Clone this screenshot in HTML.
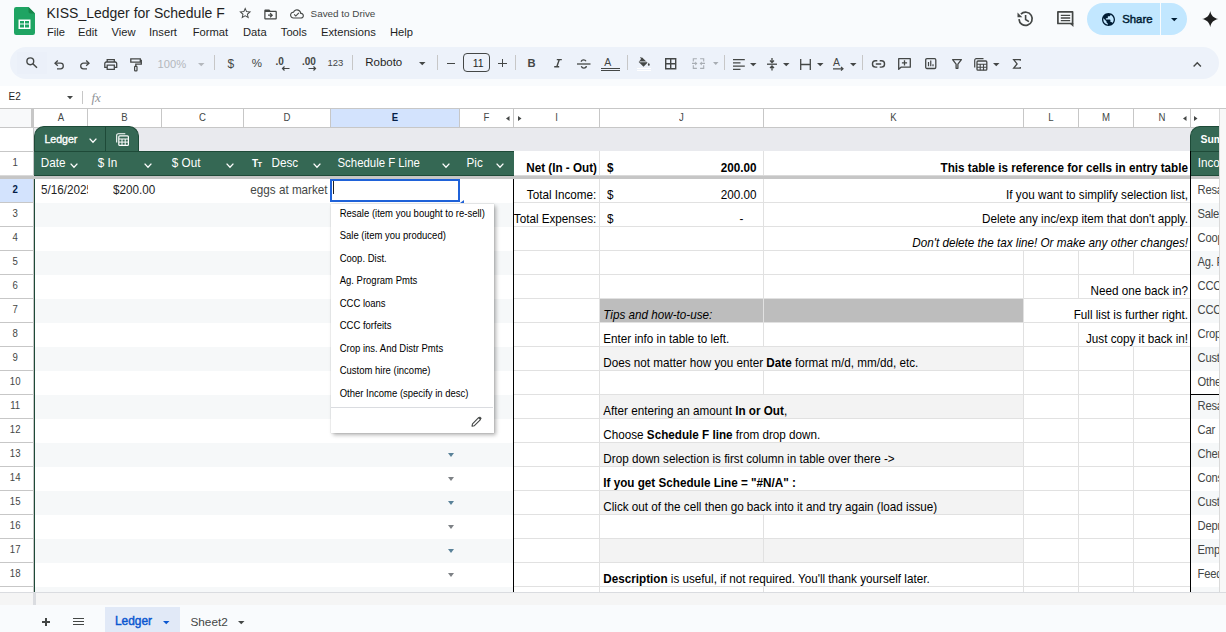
<!DOCTYPE html>
<html><head><meta charset="utf-8">
<style>
*{margin:0;padding:0;box-sizing:border-box}
html,body{width:1226px;height:632px;overflow:hidden;background:#f9fbfd;font-family:"Liberation Sans",sans-serif;color:#1f1f1f;position:relative}
.a{position:absolute}
.t{position:absolute;white-space:nowrap;line-height:1}
svg{position:absolute;overflow:visible}
</style></head><body>

<svg style="left:14px;top:7px" width="21" height="28" viewBox="0 0 21 28"><path d="M2.2 0H14.5L21 6.5V25.8a2.2 2.2 0 0 1-2.2 2.2H2.2A2.2 2.2 0 0 1 0 25.8V2.2A2.2 2.2 0 0 1 2.2 0z" fill="#1fa463"/>
<path d="M14.5 0L21 6.5H16.3a1.8 1.8 0 0 1-1.8-1.8z" fill="#16864a"/>
<path d="M4.5 12.5h12v9.5h-12z" fill="#fff"/>
<path d="M6 14h4v2.5H6zM11 14h4v2.5h-4zM6 17.5h4V20.5H6zM11 17.5h4V20.5h-4z" fill="#1fa463"/></svg>
<div class="t" style="left:46.50px;top:6.15px;font-size:14px;color:#1f1f1f;font-weight:normal;font-style:normal;">KISS_Ledger for Schedule F</div>
<svg style="left:238.3px;top:6.4px" width="14.4" height="14.4" viewBox="0 0 24 24"><path d="M22 9.24l-7.19-.62L12 2 9.19 8.63 2 9.24l5.46 4.73L5.82 21 12 17.27 18.18 21l-1.63-7.03L22 9.24zM12 15.4l-3.76 2.27 1-4.28-3.32-2.88 4.38-.38L12 6.1l1.71 4.04 4.38.38-3.32 2.88 1 4.28L12 15.4z" fill="#444746"/></svg>
<svg style="left:263.3px;top:6.9px" width="15.1" height="15.1" viewBox="0 0 24 24"><path d="M20 6h-8l-2-2H4c-1.1 0-1.99.9-1.99 2L2 18c0 1.1.9 2 2 2h16c1.1 0 2-.9 2-2V8c0-1.1-.9-2-2-2zm0 12H4V8h16v10zM12.16 12H8v2h4.16l-1.59 1.59L11.98 17 16 13l-4.02-4-1.41 1.41z" fill="#444746"/></svg>
<svg style="left:290px;top:6.6px" width="13.9" height="13.9" viewBox="0 0 24 24"><path d="M19.35 10.04C18.67 6.59 15.64 4 12 4 9.11 4 6.6 5.64 5.35 8.04 2.34 8.36 0 10.91 0 14c0 3.31 2.69 6 6 6h13c2.76 0 5-2.24 5-5 0-2.64-2.05-4.78-4.65-4.96zM19 18H6c-2.21 0-4-1.79-4-4 0-2.05 1.53-3.76 3.56-3.97l1.07-.11.5-.95C8.08 7.14 9.94 6 12 6c2.62 0 4.88 1.86 5.39 4.43l.3 1.5 1.53.11c1.56.1 2.78 1.41 2.78 2.96 0 1.65-1.35 3-3 3zm-9-3.82l-2.09-2.09L6.5 13.5 10 17l6.01-6.01-1.41-1.41z" fill="#444746"/></svg>
<div class="t" style="left:310.60px;top:8.82px;font-size:9.9px;color:#444746;font-weight:normal;font-style:normal;">Saved to Drive</div>
<div class="t" style="left:47.00px;top:27.12px;font-size:11.2px;color:#1f1f1f;font-weight:normal;font-style:normal;">File</div>
<div class="t" style="left:78.00px;top:27.12px;font-size:11.2px;color:#1f1f1f;font-weight:normal;font-style:normal;">Edit</div>
<div class="t" style="left:111.60px;top:27.12px;font-size:11.2px;color:#1f1f1f;font-weight:normal;font-style:normal;">View</div>
<div class="t" style="left:149.00px;top:27.12px;font-size:11.2px;color:#1f1f1f;font-weight:normal;font-style:normal;">Insert</div>
<div class="t" style="left:192.70px;top:27.12px;font-size:11.2px;color:#1f1f1f;font-weight:normal;font-style:normal;">Format</div>
<div class="t" style="left:243.00px;top:27.12px;font-size:11.2px;color:#1f1f1f;font-weight:normal;font-style:normal;">Data</div>
<div class="t" style="left:280.80px;top:27.12px;font-size:11.2px;color:#1f1f1f;font-weight:normal;font-style:normal;">Tools</div>
<div class="t" style="left:321.00px;top:27.12px;font-size:11.2px;color:#1f1f1f;font-weight:normal;font-style:normal;">Extensions</div>
<div class="t" style="left:390.00px;top:27.12px;font-size:11.2px;color:#1f1f1f;font-weight:normal;font-style:normal;">Help</div>
<svg style="left:1016.5px;top:10.5px" width="17" height="16" viewBox="0 0 17 16"><path d="M2 8.1A6.6 6.6 0 1 0 3.93 3.13" fill="none" stroke="#444746" stroke-width="1.7"/><path d="M0.5 1.5V6.3H5.3z" fill="#444746"/><path d="M8.6 3.9V8.5L11.9 10.6" fill="none" stroke="#444746" stroke-width="1.6"/></svg>
<svg style="left:1056.5px;top:11px" width="17" height="16" viewBox="0 0 17 16"><path d="M0.9 0.9H15.6V12.5H0.9z" fill="none" stroke="#444746" stroke-width="1.7" stroke-linejoin="round"/><path d="M12.4 12.3L16.45 16V12.3z" fill="#444746"/><path d="M3.8 4.4H13.2M3.8 7H13.2M3.8 9.6H13.2" stroke="#444746" stroke-width="1.3"/></svg>
<div class="a" style="left:1087px;top:3px;width:100px;height:32px;background:#c2e7ff;border-radius:16px"></div>
<div class="a" style="left:1160px;top:3px;width:1px;height:32px;background:#f9fbfd;"></div>
<svg style="left:1102px;top:12.8px" width="13" height="13" viewBox="2 2 20 20"><path d="M12 2C6.48 2 2 6.48 2 12s4.48 10 10 10 10-4.48 10-10S17.52 2 12 2zm-1 17.93c-3.95-.49-7-3.85-7-7.93 0-.62.08-1.21.21-1.79L9 15v1c0 1.1.9 2 2 2v1.93zm6.9-2.54c-.26-.81-1-1.39-1.9-1.39h-1v-3c0-.55-.45-1-1-1H8v-2h2c.55 0 1-.45 1-1V7h2c1.1 0 2-.9 2-2v-.41c2.93 1.19 5 4.06 5 7.41 0 2.08-.8 3.97-2.1 5.39z" fill="#001d35"/></svg>
<div class="t" style="left:1122.20px;top:13.75px;font-size:11.4px;color:#001d35;font-weight:normal;font-style:normal;-webkit-text-stroke:0.45px #001d35">Share</div>
<svg style="left:1170.5px;top:18px" width="7" height="4" viewBox="0 0 7 4"><path d="M0 0h6.5L3.25 3.2z" fill="#001d35"/></svg>
<svg style="left:1201.5px;top:10.8px" width="16.5" height="16" viewBox="0 0 16.5 16"><path d="M8.25 0C8.9 4.3 12 7.4 16.5 8 12 8.6 8.9 11.7 8.25 16 7.6 11.7 4.5 8.6 0 8 4.5 7.4 7.6 4.3 8.25 0z" fill="#1f1f1f"/></svg>
<div class="a" style="left:10px;top:47px;width:1209px;height:32px;background:#edf2fa;border-radius:16px"></div>
<div class="a" style="left:17px;top:52px;width:30px;height:22px;background:#ebf0f9;"></div>
<svg style="left:26px;top:57.2px" width="12" height="11" viewBox="0 0 12 11"><circle cx="4.3" cy="4.3" r="3.4" fill="none" stroke="#444746" stroke-width="1.4"/><path d="M6.8 6.8l4.2 4" stroke="#444746" stroke-width="1.5"/></svg>
<svg style="left:54px;top:60px" width="10" height="9" viewBox="0 0 10 9"><path d="M1.5 3.2h5a2.8 2.8 0 0 1 0 5.6H3" fill="none" stroke="#444746" stroke-width="1.3"/><path d="M3.8 0.6L1 3.2l2.8 2.6" fill="none" stroke="#444746" stroke-width="1.3"/></svg>
<svg style="left:79.5px;top:60px" width="10" height="9" viewBox="0 0 10 9"><path d="M8.5 3.2h-5a2.8 2.8 0 0 0 0 5.6H7" fill="none" stroke="#444746" stroke-width="1.3"/><path d="M6.2 0.6L9 3.2 6.2 5.8" fill="none" stroke="#444746" stroke-width="1.3"/></svg>
<svg style="left:104px;top:58.5px" width="13.5" height="11" viewBox="0 0 13.5 11"><path d="M3.2 3V0.7h7.1V3" fill="none" stroke="#444746" stroke-width="1.3"/><path d="M3 8.3H0.8V4.5a1.5 1.5 0 0 1 1.5-1.5h8.9a1.5 1.5 0 0 1 1.5 1.5v3.8H10.5" fill="none" stroke="#444746" stroke-width="1.3"/><path d="M3.2 6.2h7.1v4.2H3.2z" fill="none" stroke="#444746" stroke-width="1.3"/></svg>
<svg style="left:130px;top:57.5px" width="12" height="13.5" viewBox="0 0 12 13.5"><path d="M0.8 0.8h9.5v3.4H0.8z" fill="none" stroke="#444746" stroke-width="1.3"/><path d="M10.3 2.5h1v3.6H5.8v2.2" fill="none" stroke="#444746" stroke-width="1.3"/><rect x="4.6" y="8.3" width="2.4" height="4.6" rx="0.6" fill="none" stroke="#444746" stroke-width="1.2"/></svg>
<div class="t" style="left:157.50px;top:58.82px;font-size:11.2px;color:#b4b8bd;font-weight:normal;font-style:normal;">100%</div>
<svg style="left:197.5px;top:62.5px" width="7" height="3.5" viewBox="0 0 7 3.5"><path d="M0 0h6.5L3.25 3.2z" fill="#b4b8bd"/></svg>
<div class="a" style="left:214px;top:55px;width:1px;height:15px;background:#c7c7c7;"></div>
<div class="t" style="left:227.60px;top:57.64px;font-size:12px;color:#444746;font-weight:normal;font-style:normal;">$</div>
<div class="t" style="left:251.80px;top:58.07px;font-size:11.5px;color:#444746;font-weight:normal;font-style:normal;">%</div>
<div class="t" style="left:275.50px;top:56.53px;font-size:10px;color:#444746;font-weight:bold;font-style:normal;">.0</div>
<svg style="left:281px;top:65.5px" width="9" height="5" viewBox="0 0 9 5"><path d="M8.5 2.5H1.5M3.5 0.5l-2 2 2 2" fill="none" stroke="#444746" stroke-width="1.2"/></svg>
<div class="t" style="left:302.00px;top:56.53px;font-size:10px;color:#444746;font-weight:bold;font-style:normal;">.00</div>
<svg style="left:308px;top:65.5px" width="9" height="5" viewBox="0 0 9 5"><path d="M0.5 2.5h7M5.5 0.5l2 2-2 2" fill="none" stroke="#444746" stroke-width="1.2"/></svg>
<div class="t" style="left:327.50px;top:58.46px;font-size:9.5px;color:#444746;font-weight:normal;font-style:normal;">123</div>
<div class="a" style="left:352px;top:55px;width:1px;height:15px;background:#c7c7c7;"></div>
<div class="t" style="left:365.20px;top:57.27px;font-size:11.5px;color:#1f1f1f;font-weight:normal;font-style:normal;">Roboto</div>
<svg style="left:418.5px;top:62px" width="6.5" height="3.5" viewBox="0 0 6.5 3.5"><path d="M0 0h6.5L3.25 3.2z" fill="#444746"/></svg>
<div class="a" style="left:437px;top:55px;width:1px;height:15px;background:#c7c7c7;"></div>
<div class="a" style="left:446.6px;top:62.5px;width:8.5px;height:1.4px;background:#444746;"></div>
<div class="a" style="left:463.3px;top:53.2px;width:26.4px;height:19.2px;border:1.3px solid #444746;border-radius:4px"></div>
<div class="t" style="left:472.70px;top:58.11px;font-size:10.5px;color:#1f1f1f;font-weight:normal;font-style:normal;">11</div>
<div class="a" style="left:498px;top:62.5px;width:8.5px;height:1.4px;background:#444746;"></div>
<div class="a" style="left:501.55px;top:58.5px;width:1.4px;height:8.5px;background:#444746;"></div>
<div class="a" style="left:515px;top:55px;width:1px;height:15px;background:#c7c7c7;"></div>
<div class="t" style="left:527.60px;top:58.02px;font-size:11.2px;color:#444746;font-weight:bold;font-style:normal;">B</div>
<svg style="left:554px;top:59.3px" width="8" height="8.5" viewBox="0 0 8 8.5"><path d="M2.8 0.6h5M0.2 7.8h5M5.3 0.6l-2.5 7.2" fill="none" stroke="#444746" stroke-width="1.4"/></svg>
<svg style="left:576.8px;top:58.5px" width="13.5" height="10" viewBox="0 0 13.5 10"><path d="M0 5h13.5" stroke="#444746" stroke-width="1.3"/><path d="M9 2.2C8.5 1.2 7.6 0.8 6.7 0.8 5.3 0.8 4.3 1.5 4.3 2.8M4.3 7.2c.4 1.2 1.4 1.9 2.5 1.9 1.4 0 2.5-.7 2.5-2" fill="none" stroke="#444746" stroke-width="1.3"/></svg>
<div class="t" style="left:604.30px;top:56.71px;font-size:10.5px;color:#444746;font-weight:normal;font-style:normal;">A</div>
<div class="a" style="left:601px;top:68px;width:19px;height:1px;background:#444746;"></div>
<div class="a" style="left:601px;top:70px;width:19px;height:1px;background:#444746;"></div>
<div class="a" style="left:627px;top:55px;width:1px;height:15px;background:#c7c7c7;"></div>
<svg style="left:637.9px;top:57px" width="12" height="9.5" viewBox="0 0 12 9.5"><path d="M4.2 0.5l5.3 5.3-4 4-4.8-4.8z" fill="#444746"/><path d="M1.5 4.8h7.2" stroke="#edf2fa" stroke-width="0.8"/><path d="M10.8 5.8c.6.9 1 1.5 1 2a1 1 0 0 1-2 0c0-.5.4-1.1 1-2z" fill="#444746"/><path d="M2.5 0.3l2 2" stroke="#444746" stroke-width="1.2"/></svg>
<div class="a" style="left:636.5px;top:68px;width:14px;height:1px;background:#ffffff;"></div>
<div class="a" style="left:636.5px;top:70px;width:14px;height:1px;background:#ffffff;"></div>
<svg style="left:665px;top:58px" width="11.5" height="11.5" viewBox="0 0 11.5 11.5"><path d="M0.7 0.7h10v10h-10zM5.7 0.7v10M0.7 5.7h10" fill="none" stroke="#444746" stroke-width="1.4"/></svg>
<svg style="left:692px;top:58px" width="13" height="11" viewBox="0 0 13 11"><path d="M4.9 0.7H1.3V3.6M1.3 7.2V10.4H4.9M8.1 0.7h3.6V3.6M11.7 7.2V10.4H8.1M0 5.4h3.8M13 5.4H9.2" fill="none" stroke="#a8adb3" stroke-width="1.1"/><path d="M3.2 3.4L5.4 5.4 3.2 7.4zM9.8 3.4L7.6 5.4 9.8 7.4z" fill="#a8adb3"/></svg>
<svg style="left:712.5px;top:62px" width="5.5" height="3" viewBox="0 0 5.5 3"><path d="M0 0h5.5L2.75 3z" fill="#a8adb3"/></svg>
<div class="a" style="left:724px;top:55px;width:1px;height:15px;background:#c7c7c7;"></div>
<svg style="left:732.8px;top:58.5px" width="12" height="11" viewBox="0 0 12 11"><path d="M0 0.7h11.8M0 3.9h7.5M0 7.1h11.8M0 10.3h7.5" stroke="#444746" stroke-width="1.3"/></svg>
<svg style="left:749.8px;top:63px" width="6.5" height="3.5" viewBox="0 0 6.5 3.5"><path d="M0 0h6.5L3.25 3.2z" fill="#444746"/></svg>
<svg style="left:766.5px;top:57.5px" width="10" height="12.5" viewBox="0 0 10 12.5"><path d="M0 6.2h10" stroke="#444746" stroke-width="1.3"/><path d="M5 0v4.2M3 2.5L5 4.5 7 2.5M5 12.5V8.3M3 10l2-2 2 2" fill="none" stroke="#444746" stroke-width="1.3"/></svg>
<svg style="left:783px;top:63px" width="6.5" height="3.5" viewBox="0 0 6.5 3.5"><path d="M0 0h6.5L3.25 3.2z" fill="#444746"/></svg>
<svg style="left:800px;top:58.5px" width="11" height="11" viewBox="0 0 11 11"><path d="M0.7 0v11M10.3 0v11M0.7 5.5h9.6" fill="none" stroke="#444746" stroke-width="1.3"/></svg>
<svg style="left:817px;top:63px" width="6.5" height="3.5" viewBox="0 0 6.5 3.5"><path d="M0 0h6.5L3.25 3.2z" fill="#444746"/></svg>
<div class="t" style="left:833.00px;top:56.61px;font-size:10.5px;color:#444746;font-weight:normal;font-style:normal;">A</div>
<svg style="left:832.5px;top:66.5px" width="11" height="4.5" viewBox="0 0 11 4.5"><path d="M0 1.8h9.5M8 0l2 1.8-2 1.8" fill="none" stroke="#444746" stroke-width="1.2"/></svg>
<svg style="left:849.7px;top:63px" width="6.5" height="3.5" viewBox="0 0 6.5 3.5"><path d="M0 0h6.5L3.25 3.2z" fill="#444746"/></svg>
<div class="a" style="left:862px;top:55px;width:1px;height:15px;background:#c7c7c7;"></div>
<svg style="left:872px;top:59.5px" width="13" height="8" viewBox="0 0 13 8"><path d="M5.3 0.8H3.6a3.1 3.1 0 0 0 0 6.3h1.7M7.7 0.8h1.7a3.1 3.1 0 0 1 0 6.3H7.7M3.8 3.95h5.4" fill="none" stroke="#444746" stroke-width="1.4"/></svg>
<svg style="left:898.2px;top:57.7px" width="13" height="12" viewBox="0 0 13 12"><path d="M0.7 0.7h11.6v8.5H3L0.7 11.3z" fill="none" stroke="#444746" stroke-width="1.3" stroke-linejoin="round"/><path d="M6.5 2.3v5.2M3.9 4.9h5.2" stroke="#444746" stroke-width="1.3"/></svg>
<svg style="left:924.6px;top:58.3px" width="11.5" height="11.2" viewBox="0 0 11.5 11.2"><rect x="0.7" y="0.7" width="10.1" height="9.8" rx="1.2" fill="none" stroke="#444746" stroke-width="1.3"/><path d="M3.5 4v4.3M5.75 2.6v5.7M8 6.3v2" stroke="#444746" stroke-width="1.2"/></svg>
<svg style="left:951.6px;top:59.1px" width="10" height="9.5" viewBox="0 0 10 9.5"><path d="M0.6 0.7h8.8L5.9 5.2v4.1H4.1V5.2z" fill="none" stroke="#444746" stroke-width="1.3" stroke-linejoin="round"/></svg>
<svg style="left:974px;top:57.7px" width="13.5" height="12.8" viewBox="0 0 13.5 12.8"><path d="M0.7 9.5V2.3a1.6 1.6 0 0 1 1.6-1.6h7.2" fill="none" stroke="#444746" stroke-width="1.2"/><rect x="3" y="3" width="9.8" height="9.2" rx="1" fill="none" stroke="#444746" stroke-width="1.3"/><path d="M3 6.2h9.8M3 9.2h9.8M6.2 6.2v6M9.5 6.2v6" stroke="#444746" stroke-width="1.1"/></svg>
<svg style="left:993px;top:63px" width="6.5" height="3.5" viewBox="0 0 6.5 3.5"><path d="M0 0h6.5L3.25 3.2z" fill="#444746"/></svg>
<svg style="left:1012.7px;top:58.7px" width="7.5" height="9.8" viewBox="0 0 7.5 9.8"><path d="M7.3 1.8V0.7H0.7l3.4 4.2L0.7 9.1h6.6V8" fill="none" stroke="#444746" stroke-width="1.3"/></svg>
<svg style="left:1192.6px;top:61.8px" width="8.5" height="5" viewBox="0 0 8.5 5"><path d="M0.6 4.5l3.65-3.7 3.65 3.7" fill="none" stroke="#444746" stroke-width="1.4"/></svg>
<div class="a" style="left:0px;top:86px;width:1226px;height:22px;background:#ffffff;"></div>
<div class="t" style="left:8.50px;top:91.53px;font-size:10px;color:#1f1f1f;font-weight:normal;font-style:normal;">E2</div>
<svg style="left:66.6px;top:96px" width="6" height="3.2" viewBox="0 0 6 3.2"><path d="M0 0h6L3 3.2z" fill="#444746"/></svg>
<div class="a" style="left:82px;top:91px;width:1px;height:13px;background:#c7c7c7;"></div>
<div class="t" style="left:91.50px;top:90.50px;font-size:13px;color:#909398;font-weight:normal;font-style:italic;font-family:'Liberation Serif',serif;">fx</div>
<div class="a" style="left:0px;top:108px;width:1226px;height:497px;background:#ffffff;"></div>
<div class="a" style="left:0px;top:108px;width:1226px;height:1px;background:#c7c7c7;"></div>
<div class="a" style="left:0px;top:127px;width:1219px;height:1px;background:#c7c7c7;"></div>
<div class="a" style="left:0px;top:109px;width:31px;height:18px;background:#f8f9fa;"></div>
<div class="a" style="left:31px;top:109px;width:3px;height:18px;background:#c7c7c7;"></div>
<div class="a" style="left:331px;top:109px;width:128px;height:18px;background:#d3e3fd;"></div>
<div class="a" style="left:87px;top:109px;width:1px;height:18px;background:#c7c7c7;"></div>
<div class="t" style="left:-39.00px;width:200px;text-align:center;top:112.77px;font-size:9.6px;color:#444746;font-weight:normal;font-style:normal;transform-origin:0 8.13px;transform:scaleY(1.15);">A</div>
<div class="a" style="left:161px;top:109px;width:1px;height:18px;background:#c7c7c7;"></div>
<div class="t" style="left:24.50px;width:200px;text-align:center;top:112.77px;font-size:9.6px;color:#444746;font-weight:normal;font-style:normal;transform-origin:0 8.13px;transform:scaleY(1.15);">B</div>
<div class="a" style="left:243px;top:109px;width:1px;height:18px;background:#c7c7c7;"></div>
<div class="t" style="left:102.50px;width:200px;text-align:center;top:112.77px;font-size:9.6px;color:#444746;font-weight:normal;font-style:normal;transform-origin:0 8.13px;transform:scaleY(1.15);">C</div>
<div class="a" style="left:330px;top:109px;width:1px;height:18px;background:#c7c7c7;"></div>
<div class="t" style="left:187.00px;width:200px;text-align:center;top:112.77px;font-size:9.6px;color:#444746;font-weight:normal;font-style:normal;transform-origin:0 8.13px;transform:scaleY(1.15);">D</div>
<div class="a" style="left:459px;top:109px;width:1px;height:18px;background:#c7c7c7;"></div>
<div class="t" style="left:295.00px;width:200px;text-align:center;top:112.77px;font-size:9.6px;color:#041e49;font-weight:bold;font-style:normal;transform-origin:0 8.13px;transform:scaleY(1.15);">E</div>
<div class="a" style="left:513px;top:109px;width:1px;height:18px;background:#c7c7c7;"></div>
<div class="t" style="left:386.50px;width:200px;text-align:center;top:112.77px;font-size:9.6px;color:#444746;font-weight:normal;font-style:normal;transform-origin:0 8.13px;transform:scaleY(1.15);">F</div>
<div class="a" style="left:599px;top:109px;width:1px;height:18px;background:#c7c7c7;"></div>
<div class="t" style="left:456.50px;width:200px;text-align:center;top:112.77px;font-size:9.6px;color:#444746;font-weight:normal;font-style:normal;transform-origin:0 8.13px;transform:scaleY(1.15);">I</div>
<div class="a" style="left:763px;top:109px;width:1px;height:18px;background:#c7c7c7;"></div>
<div class="t" style="left:581.50px;width:200px;text-align:center;top:112.77px;font-size:9.6px;color:#444746;font-weight:normal;font-style:normal;transform-origin:0 8.13px;transform:scaleY(1.15);">J</div>
<div class="a" style="left:1023px;top:109px;width:1px;height:18px;background:#c7c7c7;"></div>
<div class="t" style="left:793.50px;width:200px;text-align:center;top:112.77px;font-size:9.6px;color:#444746;font-weight:normal;font-style:normal;transform-origin:0 8.13px;transform:scaleY(1.15);">K</div>
<div class="a" style="left:1078px;top:109px;width:1px;height:18px;background:#c7c7c7;"></div>
<div class="t" style="left:951.00px;width:200px;text-align:center;top:112.77px;font-size:9.6px;color:#444746;font-weight:normal;font-style:normal;transform-origin:0 8.13px;transform:scaleY(1.15);">L</div>
<div class="a" style="left:1133px;top:109px;width:1px;height:18px;background:#c7c7c7;"></div>
<div class="t" style="left:1006.00px;width:200px;text-align:center;top:112.77px;font-size:9.6px;color:#444746;font-weight:normal;font-style:normal;transform-origin:0 8.13px;transform:scaleY(1.15);">M</div>
<div class="a" style="left:1190px;top:109px;width:1px;height:18px;background:#c7c7c7;"></div>
<div class="t" style="left:1062.00px;width:200px;text-align:center;top:112.77px;font-size:9.6px;color:#444746;font-weight:normal;font-style:normal;transform-origin:0 8.13px;transform:scaleY(1.15);">N</div>
<svg style="left:506px;top:116px" width="3.5" height="5" viewBox="0 0 3.5 5"><path d="M3.5 0v5L0 2.5z" fill="#444746"/></svg>
<svg style="left:518px;top:116px" width="3.5" height="5" viewBox="0 0 3.5 5"><path d="M0 0v5l3.5-2.5z" fill="#444746"/></svg>
<svg style="left:1183px;top:116px" width="3.5" height="5" viewBox="0 0 3.5 5"><path d="M3.5 0v5L0 2.5z" fill="#444746"/></svg>
<svg style="left:1194px;top:116px" width="3.5" height="5" viewBox="0 0 3.5 5"><path d="M0 0v5l3.5-2.5z" fill="#444746"/></svg>
<div class="a" style="left:0px;top:128px;width:1219px;height:23px;background:#e9eaee;"></div>
<div class="a" style="left:0px;top:128px;width:33px;height:23px;background:#ffffff;"></div>
<div class="a" style="left:33px;top:128px;width:1px;height:477px;background:#c7c7c7;"></div>
<div class="a" style="left:34px;top:126px;width:105px;height:26px;background:#356854;border:1px solid #1e4a38;border-bottom:none;border-radius:10px 10px 0 0"></div>
<div class="a" style="left:105px;top:127px;width:1px;height:24px;background:#1e4a38;"></div>
<div class="t" style="left:44.40px;top:134.33px;font-size:10.6px;color:#ffffff;font-weight:normal;font-style:normal;-webkit-text-stroke:0.35px #fff">Ledger</div>
<svg style="left:88.9px;top:138.3px" width="8" height="4.8" viewBox="0 0 8 4.8"><path d="M0.6 0.6L4.0 4.2L7.4 0.6" fill="none" stroke="#ffffff" stroke-width="1.3"/></svg>
<svg style="left:115.8px;top:133px" width="13" height="13" viewBox="0 0 13 13"><path d="M0.7 9.5V2.3a1.6 1.6 0 0 1 1.6-1.6h7" fill="none" stroke="#fff" stroke-width="1.1"/><rect x="2.8" y="2.8" width="9.6" height="9.6" rx="1" fill="none" stroke="#fff" stroke-width="1.2"/><path d="M2.8 6h9.6M2.8 9.1h9.6M6 6v6.4M9.2 6v6.4" stroke="#fff" stroke-width="1"/></svg>
<div class="a" style="left:34px;top:151px;width:480px;height:24px;background:#356854;"></div>
<div class="a" style="left:34px;top:151px;width:480px;height:1px;background:#1e4a38;"></div>
<div class="t" style="left:40.80px;top:157.10px;font-size:11.7px;color:#ffffff;font-weight:normal;font-style:normal;transform-origin:0 9.90px;transform:scaleY(1.12);">Date</div>
<svg style="left:70.4px;top:162.8px" width="8" height="4.8" viewBox="0 0 8 4.8"><path d="M0.6 0.6L4.0 4.2L7.4 0.6" fill="none" stroke="#ffffff" stroke-width="1.3"/></svg>
<div class="t" style="left:97.80px;top:157.10px;font-size:11.7px;color:#ffffff;font-weight:normal;font-style:normal;transform-origin:0 9.90px;transform:scaleY(1.12);">$ In</div>
<svg style="left:144.3px;top:162.8px" width="8" height="4.8" viewBox="0 0 8 4.8"><path d="M0.6 0.6L4.0 4.2L7.4 0.6" fill="none" stroke="#ffffff" stroke-width="1.3"/></svg>
<div class="t" style="left:171.80px;top:157.10px;font-size:11.7px;color:#ffffff;font-weight:normal;font-style:normal;transform-origin:0 9.90px;transform:scaleY(1.12);">$ Out</div>
<svg style="left:226.1px;top:162.8px" width="8" height="4.8" viewBox="0 0 8 4.8"><path d="M0.6 0.6L4.0 4.2L7.4 0.6" fill="none" stroke="#ffffff" stroke-width="1.3"/></svg>
<div class="t" style="left:251.90px;top:158.94px;font-size:10px;color:#ffffff;font-weight:bold;font-style:normal;">T</div>
<div class="t" style="left:257.60px;top:161.05px;font-size:7.5px;color:#ffffff;font-weight:bold;font-style:normal;">T</div>
<div class="t" style="left:271.50px;top:157.10px;font-size:11.7px;color:#ffffff;font-weight:normal;font-style:normal;transform-origin:0 9.90px;transform:scaleY(1.12);">Desc</div>
<svg style="left:313.2px;top:162.8px" width="8" height="4.8" viewBox="0 0 8 4.8"><path d="M0.6 0.6L4.0 4.2L7.4 0.6" fill="none" stroke="#ffffff" stroke-width="1.3"/></svg>
<div class="t" style="left:337.50px;top:157.85px;font-size:11.4px;color:#ffffff;font-weight:normal;font-style:normal;transform-origin:0 9.65px;transform:scaleY(1.12);">Schedule F Line</div>
<svg style="left:442.3px;top:162.8px" width="8" height="4.8" viewBox="0 0 8 4.8"><path d="M0.6 0.6L4.0 4.2L7.4 0.6" fill="none" stroke="#ffffff" stroke-width="1.3"/></svg>
<div class="t" style="left:466.50px;top:157.10px;font-size:11.7px;color:#ffffff;font-weight:normal;font-style:normal;transform-origin:0 9.90px;transform:scaleY(1.12);">Pic</div>
<svg style="left:495.6px;top:162.8px" width="8" height="4.8" viewBox="0 0 8 4.8"><path d="M0.6 0.6L4.0 4.2L7.4 0.6" fill="none" stroke="#ffffff" stroke-width="1.3"/></svg>
<div class="t" style="left:-84.80px;width:200px;text-align:center;top:157.87px;font-size:9.6px;color:#444746;font-weight:normal;font-style:normal;transform-origin:0 8.13px;transform:scaleY(1.2);">1</div>
<div class="a" style="left:0px;top:151px;width:33px;height:1px;background:#c7c7c7;"></div>
<div class="a" style="left:31px;top:127px;width:3px;height:1px;background:#c7c7c7;"></div>
<div class="a" style="left:0px;top:179px;width:33px;height:24px;background:#d3e3fd;"></div>
<div class="t" style="left:-84.80px;width:200px;text-align:center;top:185.37px;font-size:9.6px;color:#041e49;font-weight:bold;font-style:normal;transform-origin:0 8.13px;transform:scaleY(1.2);">2</div>
<div class="a" style="left:0px;top:202px;width:33px;height:1px;background:#c7c7c7;"></div>
<div class="t" style="left:-84.80px;width:200px;text-align:center;top:209.37px;font-size:9.6px;color:#444746;font-weight:normal;font-style:normal;transform-origin:0 8.13px;transform:scaleY(1.2);">3</div>
<div class="a" style="left:0px;top:226px;width:33px;height:1px;background:#c7c7c7;"></div>
<div class="t" style="left:-84.80px;width:200px;text-align:center;top:233.37px;font-size:9.6px;color:#444746;font-weight:normal;font-style:normal;transform-origin:0 8.13px;transform:scaleY(1.2);">4</div>
<div class="a" style="left:0px;top:250px;width:33px;height:1px;background:#c7c7c7;"></div>
<div class="t" style="left:-84.80px;width:200px;text-align:center;top:257.37px;font-size:9.6px;color:#444746;font-weight:normal;font-style:normal;transform-origin:0 8.13px;transform:scaleY(1.2);">5</div>
<div class="a" style="left:0px;top:274px;width:33px;height:1px;background:#c7c7c7;"></div>
<div class="t" style="left:-84.80px;width:200px;text-align:center;top:281.37px;font-size:9.6px;color:#444746;font-weight:normal;font-style:normal;transform-origin:0 8.13px;transform:scaleY(1.2);">6</div>
<div class="a" style="left:0px;top:298px;width:33px;height:1px;background:#c7c7c7;"></div>
<div class="t" style="left:-84.80px;width:200px;text-align:center;top:305.37px;font-size:9.6px;color:#444746;font-weight:normal;font-style:normal;transform-origin:0 8.13px;transform:scaleY(1.2);">7</div>
<div class="a" style="left:0px;top:322px;width:33px;height:1px;background:#c7c7c7;"></div>
<div class="t" style="left:-84.80px;width:200px;text-align:center;top:329.37px;font-size:9.6px;color:#444746;font-weight:normal;font-style:normal;transform-origin:0 8.13px;transform:scaleY(1.2);">8</div>
<div class="a" style="left:0px;top:346px;width:33px;height:1px;background:#c7c7c7;"></div>
<div class="t" style="left:-84.80px;width:200px;text-align:center;top:353.37px;font-size:9.6px;color:#444746;font-weight:normal;font-style:normal;transform-origin:0 8.13px;transform:scaleY(1.2);">9</div>
<div class="a" style="left:0px;top:370px;width:33px;height:1px;background:#c7c7c7;"></div>
<div class="t" style="left:-84.80px;width:200px;text-align:center;top:377.37px;font-size:9.6px;color:#444746;font-weight:normal;font-style:normal;transform-origin:0 8.13px;transform:scaleY(1.2);">10</div>
<div class="a" style="left:0px;top:394px;width:33px;height:1px;background:#c7c7c7;"></div>
<div class="t" style="left:-84.80px;width:200px;text-align:center;top:401.37px;font-size:9.6px;color:#444746;font-weight:normal;font-style:normal;transform-origin:0 8.13px;transform:scaleY(1.2);">11</div>
<div class="a" style="left:0px;top:418px;width:33px;height:1px;background:#c7c7c7;"></div>
<div class="t" style="left:-84.80px;width:200px;text-align:center;top:425.37px;font-size:9.6px;color:#444746;font-weight:normal;font-style:normal;transform-origin:0 8.13px;transform:scaleY(1.2);">12</div>
<div class="a" style="left:0px;top:442px;width:33px;height:1px;background:#c7c7c7;"></div>
<div class="t" style="left:-84.80px;width:200px;text-align:center;top:449.37px;font-size:9.6px;color:#444746;font-weight:normal;font-style:normal;transform-origin:0 8.13px;transform:scaleY(1.2);">13</div>
<div class="a" style="left:0px;top:466px;width:33px;height:1px;background:#c7c7c7;"></div>
<div class="t" style="left:-84.80px;width:200px;text-align:center;top:473.37px;font-size:9.6px;color:#444746;font-weight:normal;font-style:normal;transform-origin:0 8.13px;transform:scaleY(1.2);">14</div>
<div class="a" style="left:0px;top:490px;width:33px;height:1px;background:#c7c7c7;"></div>
<div class="t" style="left:-84.80px;width:200px;text-align:center;top:497.37px;font-size:9.6px;color:#444746;font-weight:normal;font-style:normal;transform-origin:0 8.13px;transform:scaleY(1.2);">15</div>
<div class="a" style="left:0px;top:514px;width:33px;height:1px;background:#c7c7c7;"></div>
<div class="t" style="left:-84.80px;width:200px;text-align:center;top:521.37px;font-size:9.6px;color:#444746;font-weight:normal;font-style:normal;transform-origin:0 8.13px;transform:scaleY(1.2);">16</div>
<div class="a" style="left:0px;top:538px;width:33px;height:1px;background:#c7c7c7;"></div>
<div class="t" style="left:-84.80px;width:200px;text-align:center;top:545.37px;font-size:9.6px;color:#444746;font-weight:normal;font-style:normal;transform-origin:0 8.13px;transform:scaleY(1.2);">17</div>
<div class="a" style="left:0px;top:562px;width:33px;height:1px;background:#c7c7c7;"></div>
<div class="t" style="left:-84.80px;width:200px;text-align:center;top:569.37px;font-size:9.6px;color:#444746;font-weight:normal;font-style:normal;transform-origin:0 8.13px;transform:scaleY(1.2);">18</div>
<div class="a" style="left:0px;top:586px;width:33px;height:1px;background:#c7c7c7;"></div>
<div class="a" style="left:0px;top:610px;width:33px;height:1px;background:#c7c7c7;"></div>
<div class="a" style="left:35px;top:203px;width:478px;height:24px;background:#f6f8f9;"></div>
<div class="a" style="left:35px;top:251px;width:478px;height:24px;background:#f6f8f9;"></div>
<div class="a" style="left:35px;top:299px;width:478px;height:24px;background:#f6f8f9;"></div>
<div class="a" style="left:35px;top:347px;width:478px;height:24px;background:#f6f8f9;"></div>
<div class="a" style="left:35px;top:395px;width:478px;height:24px;background:#f6f8f9;"></div>
<div class="a" style="left:35px;top:443px;width:478px;height:24px;background:#f6f8f9;"></div>
<div class="a" style="left:35px;top:491px;width:478px;height:24px;background:#f6f8f9;"></div>
<div class="a" style="left:35px;top:539px;width:478px;height:24px;background:#f6f8f9;"></div>
<div class="a" style="left:35px;top:587px;width:478px;height:24px;background:#f6f8f9;"></div>
<div class="a" style="left:34px;top:179px;width:1px;height:413px;background:#1e4a38;"></div>
<div class="a" style="left:35px;top:179px;width:53px;height:22px;overflow:hidden">
<div class="t" style="left:5.90px;top:4.60px;font-size:11.7px;color:#1f1f1f;font-weight:normal;font-style:normal;transform-origin:0 9.90px;transform:scaleY(1.12);">5/16/2025</div>
</div>
<div class="t" style="left:113.00px;top:183.60px;font-size:11.7px;color:#1f1f1f;font-weight:normal;font-style:normal;transform-origin:0 9.90px;transform:scaleY(1.12);">$200.00</div>
<div class="t" style="left:250.30px;top:184.10px;font-size:11.7px;color:#444746;font-weight:normal;font-style:normal;transform-origin:0 9.90px;transform:scaleY(1.12);">eggs at market</div>
<svg style="left:448px;top:452.6px" width="6" height="4" viewBox="0 0 6 4"><path d="M0 0h6L3 4z" fill="#5a8299"/></svg>
<svg style="left:448px;top:476.6px" width="6" height="4" viewBox="0 0 6 4"><path d="M0 0h6L3 4z" fill="#7d8185"/></svg>
<svg style="left:448px;top:500.6px" width="6" height="4" viewBox="0 0 6 4"><path d="M0 0h6L3 4z" fill="#5a8299"/></svg>
<svg style="left:448px;top:524.6px" width="6" height="4" viewBox="0 0 6 4"><path d="M0 0h6L3 4z" fill="#7d8185"/></svg>
<svg style="left:448px;top:548.6px" width="6" height="4" viewBox="0 0 6 4"><path d="M0 0h6L3 4z" fill="#5a8299"/></svg>
<svg style="left:448px;top:572.6px" width="6" height="4" viewBox="0 0 6 4"><path d="M0 0h6L3 4z" fill="#7d8185"/></svg>
<div class="a" style="left:600px;top:347px;width:423px;height:24px;background:#f3f3f3;"></div>
<div class="a" style="left:600px;top:395px;width:423px;height:24px;background:#f3f3f3;"></div>
<div class="a" style="left:600px;top:443px;width:423px;height:24px;background:#f3f3f3;"></div>
<div class="a" style="left:600px;top:491px;width:423px;height:24px;background:#f3f3f3;"></div>
<div class="a" style="left:600px;top:539px;width:423px;height:24px;background:#f3f3f3;"></div>
<div class="a" style="left:600px;top:299px;width:423px;height:24px;background:#bdbdbd;"></div>
<div class="a" style="left:514px;top:202px;width:676px;height:1px;background:#e1e1e1;"></div>
<div class="a" style="left:514px;top:226px;width:676px;height:1px;background:#e1e1e1;"></div>
<div class="a" style="left:514px;top:250px;width:676px;height:1px;background:#e1e1e1;"></div>
<div class="a" style="left:514px;top:274px;width:676px;height:1px;background:#e1e1e1;"></div>
<div class="a" style="left:514px;top:298px;width:676px;height:1px;background:#e1e1e1;"></div>
<div class="a" style="left:514px;top:322px;width:676px;height:1px;background:#e1e1e1;"></div>
<div class="a" style="left:514px;top:346px;width:676px;height:1px;background:#e1e1e1;"></div>
<div class="a" style="left:514px;top:370px;width:676px;height:1px;background:#e1e1e1;"></div>
<div class="a" style="left:514px;top:394px;width:676px;height:1px;background:#e1e1e1;"></div>
<div class="a" style="left:514px;top:418px;width:676px;height:1px;background:#e1e1e1;"></div>
<div class="a" style="left:514px;top:442px;width:676px;height:1px;background:#e1e1e1;"></div>
<div class="a" style="left:514px;top:466px;width:676px;height:1px;background:#e1e1e1;"></div>
<div class="a" style="left:514px;top:490px;width:676px;height:1px;background:#e1e1e1;"></div>
<div class="a" style="left:514px;top:514px;width:676px;height:1px;background:#e1e1e1;"></div>
<div class="a" style="left:514px;top:538px;width:676px;height:1px;background:#e1e1e1;"></div>
<div class="a" style="left:514px;top:562px;width:676px;height:1px;background:#e1e1e1;"></div>
<div class="a" style="left:514px;top:586px;width:676px;height:1px;background:#e1e1e1;"></div>
<div class="a" style="left:514px;top:610px;width:676px;height:1px;background:#e1e1e1;"></div>
<div class="a" style="left:599px;top:151px;width:1px;height:441px;background:#e1e1e1;"></div>
<div class="a" style="left:763px;top:151px;width:1px;height:24px;background:#e1e1e1;"></div>
<div class="a" style="left:763px;top:179px;width:1px;height:24px;background:#e1e1e1;"></div>
<div class="a" style="left:763px;top:203px;width:1px;height:24px;background:#e1e1e1;"></div>
<div class="a" style="left:763px;top:227px;width:1px;height:24px;background:#e1e1e1;"></div>
<div class="a" style="left:763px;top:251px;width:1px;height:24px;background:#e1e1e1;"></div>
<div class="a" style="left:763px;top:275px;width:1px;height:24px;background:#e1e1e1;"></div>
<div class="a" style="left:763px;top:299px;width:1px;height:24px;background:#e1e1e1;"></div>
<div class="a" style="left:763px;top:323px;width:1px;height:24px;background:#e1e1e1;"></div>
<div class="a" style="left:763px;top:371px;width:1px;height:24px;background:#e1e1e1;"></div>
<div class="a" style="left:763px;top:515px;width:1px;height:24px;background:#e1e1e1;"></div>
<div class="a" style="left:763px;top:539px;width:1px;height:24px;background:#e1e1e1;"></div>
<div class="a" style="left:763px;top:587px;width:1px;height:24px;background:#e1e1e1;"></div>
<div class="a" style="left:1023px;top:251px;width:1px;height:24px;background:#e1e1e1;"></div>
<div class="a" style="left:1023px;top:275px;width:1px;height:24px;background:#e1e1e1;"></div>
<div class="a" style="left:1023px;top:299px;width:1px;height:24px;background:#e1e1e1;"></div>
<div class="a" style="left:1023px;top:323px;width:1px;height:24px;background:#e1e1e1;"></div>
<div class="a" style="left:1023px;top:347px;width:1px;height:24px;background:#e1e1e1;"></div>
<div class="a" style="left:1023px;top:371px;width:1px;height:24px;background:#e1e1e1;"></div>
<div class="a" style="left:1023px;top:395px;width:1px;height:24px;background:#e1e1e1;"></div>
<div class="a" style="left:1023px;top:419px;width:1px;height:24px;background:#e1e1e1;"></div>
<div class="a" style="left:1023px;top:443px;width:1px;height:24px;background:#e1e1e1;"></div>
<div class="a" style="left:1023px;top:467px;width:1px;height:24px;background:#e1e1e1;"></div>
<div class="a" style="left:1023px;top:491px;width:1px;height:24px;background:#e1e1e1;"></div>
<div class="a" style="left:1023px;top:515px;width:1px;height:24px;background:#e1e1e1;"></div>
<div class="a" style="left:1023px;top:539px;width:1px;height:24px;background:#e1e1e1;"></div>
<div class="a" style="left:1023px;top:563px;width:1px;height:24px;background:#e1e1e1;"></div>
<div class="a" style="left:1023px;top:587px;width:1px;height:24px;background:#e1e1e1;"></div>
<div class="a" style="left:1078px;top:251px;width:1px;height:24px;background:#e1e1e1;"></div>
<div class="a" style="left:1078px;top:275px;width:1px;height:24px;background:#e1e1e1;"></div>
<div class="a" style="left:1078px;top:323px;width:1px;height:24px;background:#e1e1e1;"></div>
<div class="a" style="left:1078px;top:347px;width:1px;height:24px;background:#e1e1e1;"></div>
<div class="a" style="left:1078px;top:371px;width:1px;height:24px;background:#e1e1e1;"></div>
<div class="a" style="left:1078px;top:395px;width:1px;height:24px;background:#e1e1e1;"></div>
<div class="a" style="left:1078px;top:419px;width:1px;height:24px;background:#e1e1e1;"></div>
<div class="a" style="left:1078px;top:443px;width:1px;height:24px;background:#e1e1e1;"></div>
<div class="a" style="left:1078px;top:467px;width:1px;height:24px;background:#e1e1e1;"></div>
<div class="a" style="left:1078px;top:491px;width:1px;height:24px;background:#e1e1e1;"></div>
<div class="a" style="left:1078px;top:515px;width:1px;height:24px;background:#e1e1e1;"></div>
<div class="a" style="left:1078px;top:539px;width:1px;height:24px;background:#e1e1e1;"></div>
<div class="a" style="left:1078px;top:563px;width:1px;height:24px;background:#e1e1e1;"></div>
<div class="a" style="left:1078px;top:587px;width:1px;height:24px;background:#e1e1e1;"></div>
<div class="a" style="left:1133px;top:251px;width:1px;height:24px;background:#e1e1e1;"></div>
<div class="a" style="left:1133px;top:347px;width:1px;height:24px;background:#e1e1e1;"></div>
<div class="a" style="left:1133px;top:371px;width:1px;height:24px;background:#e1e1e1;"></div>
<div class="a" style="left:1133px;top:395px;width:1px;height:24px;background:#e1e1e1;"></div>
<div class="a" style="left:1133px;top:419px;width:1px;height:24px;background:#e1e1e1;"></div>
<div class="a" style="left:1133px;top:443px;width:1px;height:24px;background:#e1e1e1;"></div>
<div class="a" style="left:1133px;top:467px;width:1px;height:24px;background:#e1e1e1;"></div>
<div class="a" style="left:1133px;top:491px;width:1px;height:24px;background:#e1e1e1;"></div>
<div class="a" style="left:1133px;top:515px;width:1px;height:24px;background:#e1e1e1;"></div>
<div class="a" style="left:1133px;top:539px;width:1px;height:24px;background:#e1e1e1;"></div>
<div class="a" style="left:1133px;top:563px;width:1px;height:24px;background:#e1e1e1;"></div>
<div class="a" style="left:1133px;top:587px;width:1px;height:24px;background:#e1e1e1;"></div>
<div class="a" style="left:0px;top:175px;width:1219px;height:1px;background:#d9d9d9;"></div>
<div class="a" style="left:0px;top:176px;width:1219px;height:3px;background:#c6c6c6;"></div>
<div class="a" style="left:34px;top:175px;width:480px;height:1px;background:#1e4a38;"></div>
<div class="a" style="left:1191px;top:175px;width:28px;height:1px;background:#1e4a38;"></div>
<div class="a" style="left:513px;top:179px;width:1px;height:413px;background:#000000;"></div>
<div class="a" style="left:1190px;top:178px;width:1px;height:217px;background:#000000;"></div>
<div class="a" style="left:1190px;top:394px;width:29px;height:1px;background:#000000;"></div>
<div class="a" style="left:1190px;top:394px;width:1px;height:198px;background:#000000;"></div>
<div class="t" style="right:629.00px;top:162.10px;font-size:11.7px;color:#000000;font-weight:bold;font-style:normal;transform-origin:0 9.90px;transform:scaleY(1.12);">Net (In - Out)</div>
<div class="t" style="left:606.90px;top:162.10px;font-size:11.7px;color:#000000;font-weight:bold;font-style:normal;transform-origin:0 9.90px;transform:scaleY(1.12);">$</div>
<div class="t" style="right:469.40px;top:162.10px;font-size:11.7px;color:#000000;font-weight:bold;font-style:normal;transform-origin:0 9.90px;transform:scaleY(1.12);">200.00</div>
<div class="t" style="right:38.00px;top:162.10px;font-size:11.7px;color:#000000;font-weight:bold;font-style:normal;transform-origin:0 9.90px;transform:scaleY(1.12);">This table is reference for cells in entry table</div>
<div class="t" style="right:629.70px;top:189.10px;font-size:11.7px;color:#000000;font-weight:normal;font-style:normal;transform-origin:0 9.90px;transform:scaleY(1.12);">Total Income:</div>
<div class="t" style="left:607.00px;top:189.10px;font-size:11.7px;color:#000000;font-weight:normal;font-style:normal;transform-origin:0 9.90px;transform:scaleY(1.12);">$</div>
<div class="t" style="right:469.40px;top:189.10px;font-size:11.7px;color:#000000;font-weight:normal;font-style:normal;transform-origin:0 9.90px;transform:scaleY(1.12);">200.00</div>
<div class="t" style="right:38.00px;top:189.10px;font-size:11.7px;color:#000000;font-weight:normal;font-style:normal;transform-origin:0 9.90px;transform:scaleY(1.12);">If you want to simplify selection list,</div>
<div class="t" style="right:629.70px;top:213.10px;font-size:11.7px;color:#000000;font-weight:normal;font-style:normal;transform-origin:0 9.90px;transform:scaleY(1.12);">Total Expenses:</div>
<div class="t" style="left:607.00px;top:213.10px;font-size:11.7px;color:#000000;font-weight:normal;font-style:normal;transform-origin:0 9.90px;transform:scaleY(1.12);">$</div>
<div class="t" style="right:482.60px;top:213.10px;font-size:11.7px;color:#000000;font-weight:normal;font-style:normal;transform-origin:0 9.90px;transform:scaleY(1.12);">-</div>
<div class="t" style="right:38.00px;top:213.10px;font-size:11.7px;color:#000000;font-weight:normal;font-style:normal;transform-origin:0 9.90px;transform:scaleY(1.12);">Delete any inc/exp item that don't apply.</div>
<div class="t" style="right:38.00px;top:237.10px;font-size:11.7px;color:#000000;font-weight:normal;font-style:italic;transform-origin:0 9.90px;transform:scaleY(1.12);">Don't delete the tax line! Or make any other changes!</div>
<div class="t" style="right:38.00px;top:285.10px;font-size:11.7px;color:#000000;font-weight:normal;font-style:normal;transform-origin:0 9.90px;transform:scaleY(1.12);">Need one back in?</div>
<div class="t" style="right:38.00px;top:309.10px;font-size:11.7px;color:#000000;font-weight:normal;font-style:normal;transform-origin:0 9.90px;transform:scaleY(1.12);">Full list is further right.</div>
<div class="t" style="right:38.00px;top:333.10px;font-size:11.7px;color:#000000;font-weight:normal;font-style:normal;transform-origin:0 9.90px;transform:scaleY(1.12);">Just copy it back in!</div>
<div class="t" style="left:603.30px;top:309.10px;font-size:11.7px;color:#000000;font-weight:normal;font-style:italic;transform-origin:0 9.90px;transform:scaleY(1.12);">Tips and how-to-use:</div>
<div class="t" style="left:603.30px;top:333.10px;font-size:11.7px;color:#000000;font-weight:normal;font-style:normal;transform-origin:0 9.90px;transform:scaleY(1.12);">Enter info in table to left.</div>
<div class="t" style="left:603.30px;top:357.10px;font-size:11.7px;color:#000000;font-weight:normal;font-style:normal;transform-origin:0 9.90px;transform:scaleY(1.12);">Does not matter how you enter <b>Date</b> format m/d, mm/dd, etc.</div>
<div class="t" style="left:603.30px;top:405.10px;font-size:11.7px;color:#000000;font-weight:normal;font-style:normal;transform-origin:0 9.90px;transform:scaleY(1.12);">After entering an amount <b>In or Out</b>,</div>
<div class="t" style="left:603.30px;top:429.10px;font-size:11.7px;color:#000000;font-weight:normal;font-style:normal;transform-origin:0 9.90px;transform:scaleY(1.12);">Choose <b>Schedule F line</b> from drop down.</div>
<div class="t" style="left:603.30px;top:453.10px;font-size:11.7px;color:#000000;font-weight:normal;font-style:normal;transform-origin:0 9.90px;transform:scaleY(1.12);">Drop down selection is first column in table over there -&gt;</div>
<div class="t" style="left:603.30px;top:477.10px;font-size:11.7px;color:#000000;font-weight:normal;font-style:normal;transform-origin:0 9.90px;transform:scaleY(1.12);"><b>If you get Schedule Line = &quot;#N/A&quot; :</b></div>
<div class="t" style="left:603.30px;top:501.10px;font-size:11.7px;color:#000000;font-weight:normal;font-style:normal;transform-origin:0 9.90px;transform:scaleY(1.12);">Click out of the cell then go back into it and try again (load issue)</div>
<div class="t" style="left:603.30px;top:573.10px;font-size:11.7px;color:#000000;font-weight:normal;font-style:normal;transform-origin:0 9.90px;transform:scaleY(1.12);"><b>Description</b> is useful, if not required. You'll thank yourself later.</div>
<div class="a" style="left:1190px;top:108px;width:29px;height:484px;overflow:hidden">
<div class="a" style="left:0;top:18px;width:60px;height:26px;background:#356854;border:1px solid #1e4a38;border-bottom:none;border-radius:10px 0 0 0"></div>
<div class="a" style="left:0;top:43px;width:60px;height:24px;background:#356854;border-top:1px solid #1e4a38"></div>
<div class="t" style="left:10.6px;top:26.50px;font-size:10.4px;color:#fff;font-weight:bold">Summary</div>
<div class="t" style="left:7.7px;top:49.10px;font-size:11.7px;color:#fff;transform-origin:0 9.90px;transform:scaleY(1.12)">Income</div>
<div class="a" style="left:1px;top:479px;width:40px;height:24px;background:#f6f8f9"></div>
<div class="t" style="left:7.5px;top:76.52px;font-size:11.2px;color:#444746;letter-spacing:-0.2px;transform-origin:0 9.48px;transform:scaleY(1.12)">Resale</div>
<div class="a" style="left:1px;top:95px;width:40px;height:24px;background:#f6f8f9"></div>
<div class="t" style="left:7.5px;top:100.52px;font-size:11.2px;color:#444746;letter-spacing:-0.2px;transform-origin:0 9.48px;transform:scaleY(1.12)">Sale</div>
<div class="t" style="left:7.5px;top:124.52px;font-size:11.2px;color:#444746;letter-spacing:-0.2px;transform-origin:0 9.48px;transform:scaleY(1.12)">Coop</div>
<div class="a" style="left:1px;top:143px;width:40px;height:24px;background:#f6f8f9"></div>
<div class="t" style="left:7.5px;top:148.52px;font-size:11.2px;color:#444746;letter-spacing:-0.2px;transform-origin:0 9.48px;transform:scaleY(1.12)">Ag. P</div>
<div class="t" style="left:7.5px;top:172.52px;font-size:11.2px;color:#444746;letter-spacing:-0.2px;transform-origin:0 9.48px;transform:scaleY(1.12)">CCC</div>
<div class="a" style="left:1px;top:191px;width:40px;height:24px;background:#f6f8f9"></div>
<div class="t" style="left:7.5px;top:196.52px;font-size:11.2px;color:#444746;letter-spacing:-0.2px;transform-origin:0 9.48px;transform:scaleY(1.12)">CCC</div>
<div class="t" style="left:7.5px;top:220.52px;font-size:11.2px;color:#444746;letter-spacing:-0.2px;transform-origin:0 9.48px;transform:scaleY(1.12)">Crop</div>
<div class="a" style="left:1px;top:239px;width:40px;height:24px;background:#f6f8f9"></div>
<div class="t" style="left:7.5px;top:244.52px;font-size:11.2px;color:#444746;letter-spacing:-0.2px;transform-origin:0 9.48px;transform:scaleY(1.12)">Cust</div>
<div class="t" style="left:7.5px;top:268.52px;font-size:11.2px;color:#444746;letter-spacing:-0.2px;transform-origin:0 9.48px;transform:scaleY(1.12)">Other</div>
<div class="a" style="left:1px;top:287px;width:40px;height:24px;background:#f6f8f9"></div>
<div class="t" style="left:7.5px;top:292.52px;font-size:11.2px;color:#444746;letter-spacing:-0.2px;transform-origin:0 9.48px;transform:scaleY(1.12)">Resale</div>
<div class="t" style="left:7.5px;top:316.52px;font-size:11.2px;color:#444746;letter-spacing:-0.2px;transform-origin:0 9.48px;transform:scaleY(1.12)">Car</div>
<div class="a" style="left:1px;top:335px;width:40px;height:24px;background:#f6f8f9"></div>
<div class="t" style="left:7.5px;top:340.52px;font-size:11.2px;color:#444746;letter-spacing:-0.2px;transform-origin:0 9.48px;transform:scaleY(1.12)">Chem</div>
<div class="t" style="left:7.5px;top:364.52px;font-size:11.2px;color:#444746;letter-spacing:-0.2px;transform-origin:0 9.48px;transform:scaleY(1.12)">Cons</div>
<div class="a" style="left:1px;top:383px;width:40px;height:24px;background:#f6f8f9"></div>
<div class="t" style="left:7.5px;top:388.52px;font-size:11.2px;color:#444746;letter-spacing:-0.2px;transform-origin:0 9.48px;transform:scaleY(1.12)">Cust</div>
<div class="t" style="left:7.5px;top:412.52px;font-size:11.2px;color:#444746;letter-spacing:-0.2px;transform-origin:0 9.48px;transform:scaleY(1.12)">Depr</div>
<div class="a" style="left:1px;top:431px;width:40px;height:24px;background:#f6f8f9"></div>
<div class="t" style="left:7.5px;top:436.52px;font-size:11.2px;color:#444746;letter-spacing:-0.2px;transform-origin:0 9.48px;transform:scaleY(1.12)">Emp</div>
<div class="t" style="left:7.5px;top:460.52px;font-size:11.2px;color:#444746;letter-spacing:-0.2px;transform-origin:0 9.48px;transform:scaleY(1.12)">Feed</div>
</div>
<div class="a" style="left:1190px;top:394px;width:29px;height:1px;background:#000000;"></div>
<div class="a" style="left:1190px;top:151px;width:1px;height:441px;background:#000000;"></div>
<div class="a" style="left:1220px;top:175px;width:6px;height:3px;background:#dfe3ea;"></div>
<div class="a" style="left:1219px;top:109px;width:7px;height:496px;background:#f8f8f8;"></div>
<div class="a" style="left:1219px;top:109px;width:1px;height:496px;background:#dadada;"></div>
<div class="a" style="left:330px;top:179px;width:130px;height:23px;border:2px solid #1f62d9"></div>
<div class="a" style="left:333.4px;top:180.6px;width:1px;height:13.6px;background:#1f1f1f;"></div>
<svg style="left:459.5px;top:200.2px" width="4" height="3" viewBox="0 0 4 3"><path d="M0 3L4 0V3z" fill="#1f62d9"/></svg>
<div class="a" style="left:331px;top:204px;width:162.5px;height:229px;background:#fff;box-shadow:2px 2px 4px rgba(0,0,0,.3),0 0 1px rgba(0,0,0,.25)"></div>
<div class="t" style="left:339.70px;top:208.76px;font-size:9.5px;color:#000000;font-weight:normal;font-style:normal;transform-origin:0 8.04px;transform:scaleY(1.15);">Resale (item you bought to re-sell)</div>
<div class="t" style="left:339.70px;top:231.26px;font-size:9.5px;color:#000000;font-weight:normal;font-style:normal;transform-origin:0 8.04px;transform:scaleY(1.15);">Sale (item you produced)</div>
<div class="t" style="left:339.70px;top:253.76px;font-size:9.5px;color:#000000;font-weight:normal;font-style:normal;transform-origin:0 8.04px;transform:scaleY(1.15);">Coop. Dist.</div>
<div class="t" style="left:339.70px;top:276.26px;font-size:9.5px;color:#000000;font-weight:normal;font-style:normal;transform-origin:0 8.04px;transform:scaleY(1.15);">Ag. Program Pmts</div>
<div class="t" style="left:339.70px;top:298.76px;font-size:9.5px;color:#000000;font-weight:normal;font-style:normal;transform-origin:0 8.04px;transform:scaleY(1.15);">CCC loans</div>
<div class="t" style="left:339.70px;top:321.26px;font-size:9.5px;color:#000000;font-weight:normal;font-style:normal;transform-origin:0 8.04px;transform:scaleY(1.15);">CCC forfeits</div>
<div class="t" style="left:339.70px;top:343.76px;font-size:9.5px;color:#000000;font-weight:normal;font-style:normal;transform-origin:0 8.04px;transform:scaleY(1.15);">Crop ins. And Distr Pmts</div>
<div class="t" style="left:339.70px;top:366.26px;font-size:9.5px;color:#000000;font-weight:normal;font-style:normal;transform-origin:0 8.04px;transform:scaleY(1.15);">Custom hire (income)</div>
<div class="t" style="left:339.70px;top:388.76px;font-size:9.5px;color:#000000;font-weight:normal;font-style:normal;transform-origin:0 8.04px;transform:scaleY(1.15);">Other Income (specify in desc)</div>
<div class="a" style="left:331px;top:407px;width:162px;height:1px;background:#dadce0;"></div>
<svg style="left:471px;top:415.8px" width="11.2" height="11" viewBox="0 0 11.2 11"><path d="M1 10.2l.5-2.4L7.6 1.7 9.5 3.6 3.4 9.7z" fill="none" stroke="#444746" stroke-width="1.1" stroke-linejoin="round"/><path d="M7.6 1.7L8.9 0.4 10.8 2.3 9.5 3.6z" fill="#444746"/></svg>
<div class="a" style="left:0px;top:592px;width:1226px;height:13px;background:#f5f5f5;"></div>
<div class="a" style="left:0px;top:592px;width:1226px;height:1px;background:#dadce0;"></div>
<div class="a" style="left:33px;top:593px;width:3px;height:12px;background:#dadce0;"></div>
<div class="a" style="left:0px;top:605px;width:1226px;height:27px;background:#f9fbfd;"></div>
<div class="a" style="left:42px;top:621.2px;width:8px;height:1.7px;background:#444746;"></div>
<div class="a" style="left:45.15px;top:618px;width:1.7px;height:8px;background:#444746;"></div>
<div class="a" style="left:73px;top:617.5px;width:11px;height:1.3px;background:#444746;"></div>
<div class="a" style="left:73px;top:620.7px;width:11px;height:1.3px;background:#444746;"></div>
<div class="a" style="left:73px;top:624px;width:11px;height:1.3px;background:#444746;"></div>
<div class="a" style="left:105px;top:607px;width:75px;height:25px;background:#e1e9f7;"></div>
<div class="t" style="left:115.00px;top:615.93px;font-size:11.9px;color:#0b57d0;font-weight:normal;font-style:normal;-webkit-text-stroke:0.45px #0b57d0">Ledger</div>
<svg style="left:163.2px;top:620.5px" width="6.5" height="3.5" viewBox="0 0 6.5 3.5"><path d="M0 0h6.5L3.25 3.2z" fill="#0b57d0"/></svg>
<div class="t" style="left:190.40px;top:616.71px;font-size:11.8px;color:#444746;font-weight:normal;font-style:normal;">Sheet2</div>
<svg style="left:237.8px;top:620.5px" width="6.5" height="3.5" viewBox="0 0 6.5 3.5"><path d="M0 0h6.5L3.25 3.2z" fill="#444746"/></svg>
</body></html>
